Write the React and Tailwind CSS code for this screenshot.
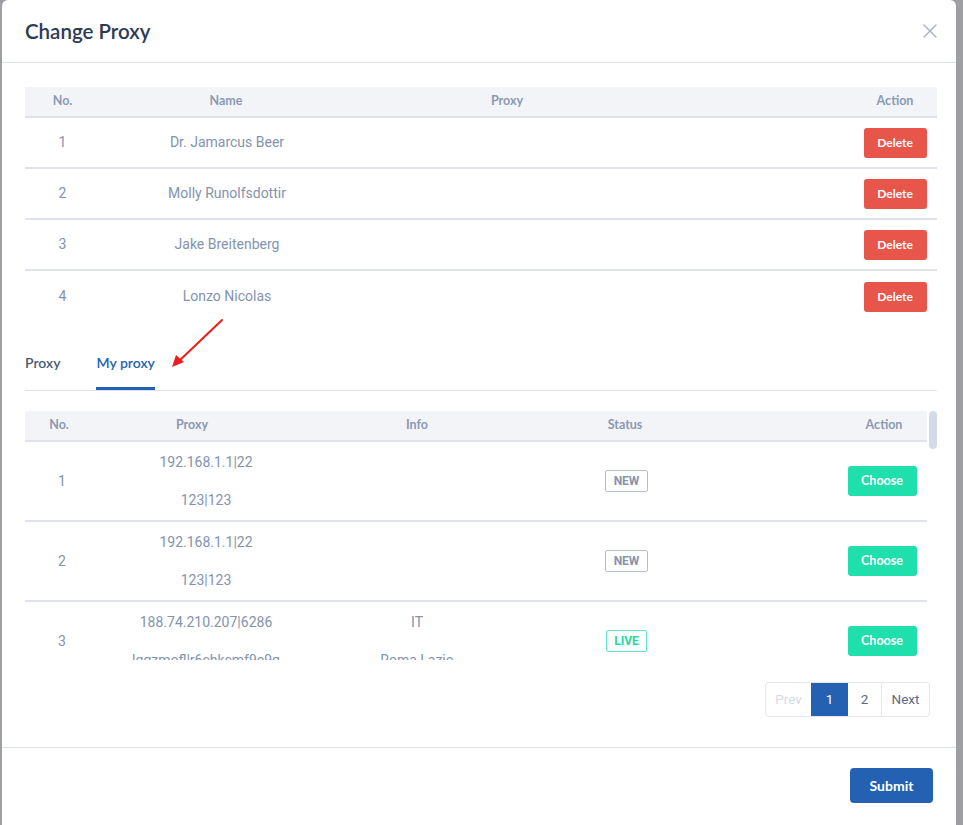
import { X } from 'lucide-react';

const people = [
  { no: 1, name: 'Dr. Jamarcus Beer' },
  { no: 2, name: 'Molly Runolfsdottir' },
  { no: 3, name: 'Jake Breitenberg' },
  { no: 4, name: 'Lonzo Nicolas' },
];

const proxies = [
  { no: 1, proxy: '192.168.1.1|22', auth: '123|123', country: '', region: '', status: 'NEW' },
  { no: 2, proxy: '192.168.1.1|22', auth: '123|123', country: '', region: '', status: 'NEW' },
  { no: 3, proxy: '188.74.210.207|6286', auth: 'lqgzmofl|r6chkcmf9e9g', country: 'IT', region: 'Roma Lazio', status: 'LIVE' },
];

const head = "font-['Lato',sans-serif] text-[12.5px] font-bold text-[#8a9ab3]";

export default function App() {
  return (
    <div className="h-[825px] w-[963px] overflow-hidden bg-[#9d9fa3] pl-[2px] font-['Roboto',sans-serif]">
      <div className="relative h-[840px] w-[954px] rounded-md bg-white">
        {/* Header */}
        <div className="flex h-[63px] items-center justify-between border-b border-[#dde1ec] pl-[23px] pr-[14px]">
          <h2 className="font-['Lato',sans-serif] text-[20.5px] font-semibold text-[#2c3a55]">Change Proxy</h2>
          <X size={24} strokeWidth={1.4} className="text-[#a9b3c4]" />
        </div>

        {/* Body */}
        <div className="pl-[23px] pr-[19px] pt-[24px] pb-[30px]">
          {/* Assigned table */}
          <div className="grid h-[31px] grid-cols-[75px_252px_310px_1fr_84px] items-center border-b-2 border-[#dfe2eb] bg-[#f3f4f8] text-center">
            <span className={head}>No.</span>
            <span className={head}>Name</span>
            <span className={head}>Proxy</span>
            <span />
            <span className={head}>Action</span>
          </div>
          {people.map((p, i) => (
            <div
              key={p.no}
              className={`grid h-[51px] grid-cols-[75px_252px_310px_1fr_84px] items-center text-center text-[14px] text-[#8393ae] ${i < people.length - 1 ? 'border-b-2 border-[#dfe2eb]' : ''}`}
            >
              <span>{p.no}</span>
              <span className="pl-[2px]">{p.name}</span>
              <span />
              <span />
              <span className="flex justify-center">
                <button className="h-[30px] w-[63px] rounded-[3px] bg-[#e8554a] font-['Lato',sans-serif] text-[12px] font-bold text-white">
                  Delete
                </button>
              </span>
            </div>
          ))}

          {/* Tabs */}
          <div className="mt-[28px] flex gap-[36px] border-b border-[#dde1ec] font-['Lato',sans-serif] text-[14px] font-semibold">
            <div className="border-b-[3px] border-transparent pb-[11px] leading-[26px] text-[#4b5a72]">Proxy</div>
            <div className="border-b-[3px] border-[#2461b2] pb-[11px] leading-[26px] text-[#2461b2]">My proxy</div>
          </div>

          {/* My proxy table */}
          <div className="mt-[20px] flex h-[249px] overflow-hidden">
            <div className="w-[902px]">
              <div className="grid h-[31px] grid-cols-[68px_198px_252px_164px_1fr_86px] items-center border-b-2 border-[#dfe2eb] bg-[#f3f4f8] text-center">
                <span className={head}>No.</span>
                <span className={head}>Proxy</span>
                <span className={head}>Info</span>
                <span className={head}>Status</span>
                <span />
                <span className={head}>Action</span>
              </div>
              {proxies.map((p) => (
                <div
                  key={p.no}
                  className="grid grid-cols-[74px_214px_208px_211px_1fr_86px] items-center border-b-2 border-[#dfe2eb] py-[10px] text-center text-[14px] text-[#8393ae]"
                >
                  <span>{p.no}</span>
                  <div>
                    <p className="leading-[20px]">{p.proxy}</p>
                    <p className="mt-[18px] leading-[20px]">{p.auth}</p>
                  </div>
                  <div>
                    <p className="h-[20px] leading-[20px]">{p.country}</p>
                    <p className="mt-[18px] h-[20px] leading-[20px]">{p.region}</p>
                  </div>
                  <span className="flex justify-center">
                    {p.status === 'LIVE' ? (
                      <span className="flex h-[22px] w-[41px] items-center justify-center rounded-[2px] border border-[#63e6c4] text-[12px] font-bold text-[#21d9a5]">
                        LIVE
                      </span>
                    ) : (
                      <span className="flex h-[22px] w-[43px] items-center justify-center rounded-[2px] border border-[#b6bfce] text-[12px] font-bold text-[#8593ab]">
                        NEW
                      </span>
                    )}
                  </span>
                  <span />
                  <span className="flex justify-center pr-[4px]">
                    <button className="h-[30px] w-[69px] rounded-[3px] bg-[#1fe0ac] font-['Lato',sans-serif] text-[12.5px] font-bold text-white">
                      Choose
                    </button>
                  </span>
                </div>
              ))}
            </div>
            <div className="ml-[2px] w-[8px]">
              <div className="h-[38px] rounded-[4px] bg-[#d5dbe6]" />
            </div>
          </div>

          {/* Pagination */}
          <div className="mt-[22px] flex justify-end pr-[7px]">
            <div className="flex h-[35px] overflow-hidden rounded-[4px] border border-[#e3e7ee] text-[13.5px]">
              <span className="flex w-[45px] items-center justify-center text-[#d5dbe6]">Prev</span>
              <span className="flex w-[37px] items-center justify-center bg-[#2461b2] text-white">1</span>
              <span className="flex w-[34px] items-center justify-center border-r border-[#e3e7ee] text-[#5c6b85]">2</span>
              <span className="flex w-[47px] items-center justify-center text-[#5c6b85]">Next</span>
            </div>
          </div>
        </div>

        {/* Footer */}
        <div className="flex justify-end border-t border-[#dde1ec] pr-[23px] pt-[20px]">
          <button className="h-[35px] w-[83px] rounded-[4px] bg-[#2461b2] font-['Lato',sans-serif] text-[14px] font-bold text-white">
            Submit
          </button>
        </div>

        {/* Annotation arrow */}
        <svg className="absolute left-[160px] top-[315px]" width="70" height="60" viewBox="0 0 70 60">
          <line x1="60" y1="5" x2="16" y2="47" stroke="#ee1c1c" strokeWidth="2" strokeLinecap="round" />
          <polygon points="10,52 14,40 22,47" fill="#ee1c1c" />
        </svg>
      </div>
    </div>
  );
}
